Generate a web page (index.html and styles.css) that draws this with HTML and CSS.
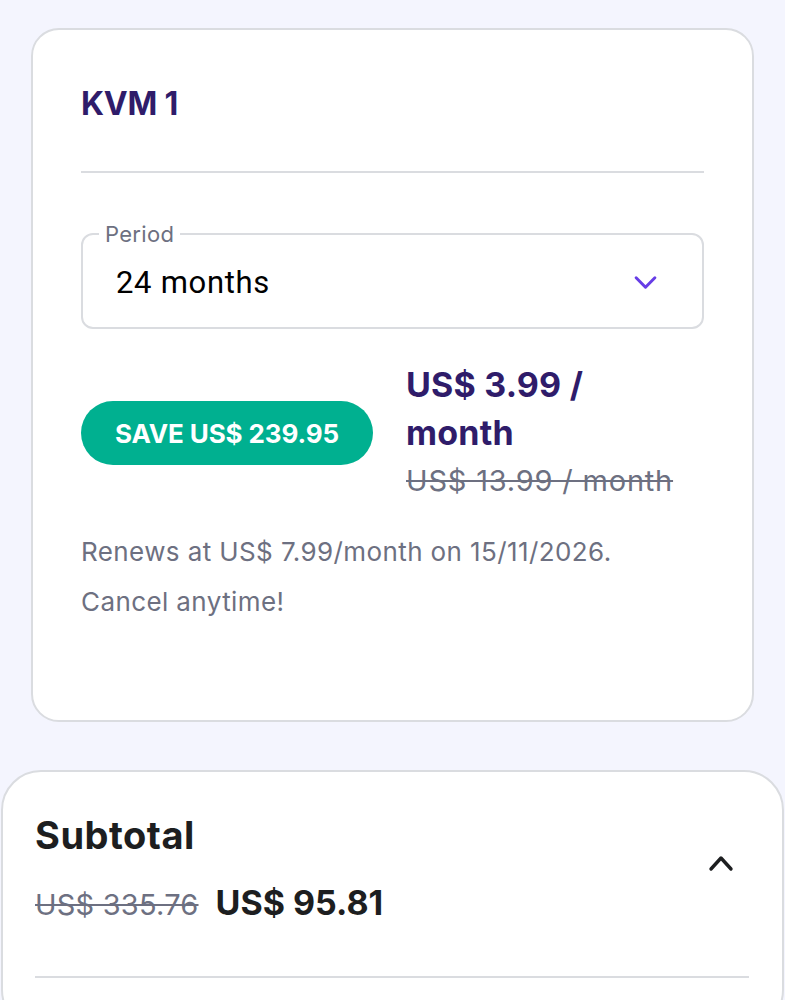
FILE: index.html
```html
<!DOCTYPE html>
<html lang="en">
<head>
    <meta charset="UTF-8">
    <meta name="viewport" content="width=device-width, initial-scale=1.0">
    <title>Cart</title>
    <link rel="stylesheet" href="styles.css">
</head>
<body>
    <!-- Plan card -->
    <div class="plan-card">
        <h2 class="plan-name">KVM 1</h2>
        <hr class="divider">

        <fieldset class="period">
            <legend>Period</legend>
            <div class="period-value">
                <span>24 months</span>
                <svg class="chevron" width="26" height="16" viewBox="0 0 26 16">
                    <path d="M3 3 L13 13 L23 3" fill="none" stroke="#673de6" stroke-width="3.2" stroke-linecap="round" stroke-linejoin="round"/>
                </svg>
            </div>
        </fieldset>

        <div class="price-row">
            <span class="save-pill">SAVE US$ 239.95</span>
            <div class="price">
                <div class="price-now">US$ 3.99 / month</div>
                <div class="price-old">US$ 13.99 / month</div>
            </div>
        </div>

        <p class="renews">Renews at US$ 7.99/month on 15/11/2026.<br>Cancel anytime!</p>
    </div>

    <!-- Subtotal summary -->
    <div class="summary">
        <div class="summary-head">
            <div>
                <h3 class="summary-title">Subtotal</h3>
                <div class="summary-prices">
                    <span class="total-old">US$ 335.76</span>
                    <span class="total-now">US$ 95.81</span>
                </div>
            </div>
            <svg class="chevron-up" width="28" height="18" viewBox="0 0 28 18">
                <path d="M4 15 L14 4 L24 15" fill="none" stroke="#1d1e20" stroke-width="3.4" stroke-linecap="round" stroke-linejoin="round"/>
            </svg>
        </div>
        <hr class="divider">
    </div>
</body>
</html>
```

FILE: styles.css
```css
* {
    margin: 0;
    padding: 0;
    box-sizing: border-box;
}

body {
    font-family: Inter, "Noto Sans", sans-serif;
    background: #f4f5fe;
    color: #1d1e20;
    padding-top: 28px;
    height: 1000px;
    overflow: hidden;
}

.divider {
    border: none;
    border-top: 2px solid #dadce0;
}

/* Plan card */
.plan-card {
    margin: 0 31px;
    background: #fff;
    border: 2px solid #dadce0;
    border-radius: 28px;
    padding: 55px 48px 60px 48px;
    height: 694px;
}

.plan-name {
    font-size: 32px;
    font-weight: 700;
    color: #2f1c6a;
    line-height: 38px;
    letter-spacing: -0.2px;
}

.plan-card .divider {
    margin-top: 48px;
}

.period {
    margin-top: 48px;
    border: 2px solid #dadce0;
    border-radius: 12px;
    padding: 0 44px 0 33px;
    height: 108px;
}

.period legend {
    font-size: 22px;
    color: #6d7081;
    padding: 0 6px;
    margin-left: -17px;
    line-height: 26px;
    letter-spacing: 0.3px;
}

.period-value {
    display: flex;
    align-items: center;
    justify-content: space-between;
    height: 70px;
    font-family: Roboto, sans-serif;
    font-size: 31px;
    letter-spacing: 0.7px;
    color: #000;
}

.chevron {
    width: 25px;
    height: 15px;
}

/* Price block */
.price-row {
    display: flex;
    align-items: center;
    gap: 33px;
    margin-top: 32px;
}

.save-pill {
    background: #00b090;
    color: #fff;
    font-weight: 700;
    font-size: 26px;
    height: 64px;
    width: 292px;
    border-radius: 32px;
    display: flex;
    align-items: center;
    justify-content: center;
    letter-spacing: -0.1px;
}

.price {
    width: 290px;
}

.price-now {
    font-size: 34px;
    font-weight: 700;
    color: #2f1c6a;
    line-height: 48px;
    letter-spacing: 0.2px;
}

.price-old {
    font-size: 29px;
    color: #6d7081;
    text-decoration: line-through;
    line-height: 48px;
    letter-spacing: 0.8px;
}

.renews {
    margin-top: 22px;
    font-size: 26px;
    color: #6d7081;
    line-height: 50px;
    letter-spacing: 0.4px;
}

/* Subtotal summary */
.summary {
    margin: 48px 1px 0 1px;
    background: #fff;
    border: 2px solid #dadce0;
    border-radius: 40px;
    padding: 38px 33px 0 32px;
    height: 260px;
}

.summary-head {
    display: flex;
    align-items: center;
    justify-content: space-between;
    padding-right: 14px;
}

.summary-title {
    font-size: 38px;
    font-weight: 700;
    line-height: 50px;
    letter-spacing: 0.5px;
}

.summary-prices {
    display: flex;
    align-items: baseline;
    gap: 17px;
    margin-top: 22px;
}

.total-old {
    font-size: 29px;
    color: #6d7081;
    text-decoration: line-through;
    letter-spacing: 0.2px;
}

.total-now {
    font-size: 34px;
    font-weight: 700;
}

.chevron-up {
    margin-bottom: 8px;
}

.summary .divider {
    margin-top: 53px;
}
```
